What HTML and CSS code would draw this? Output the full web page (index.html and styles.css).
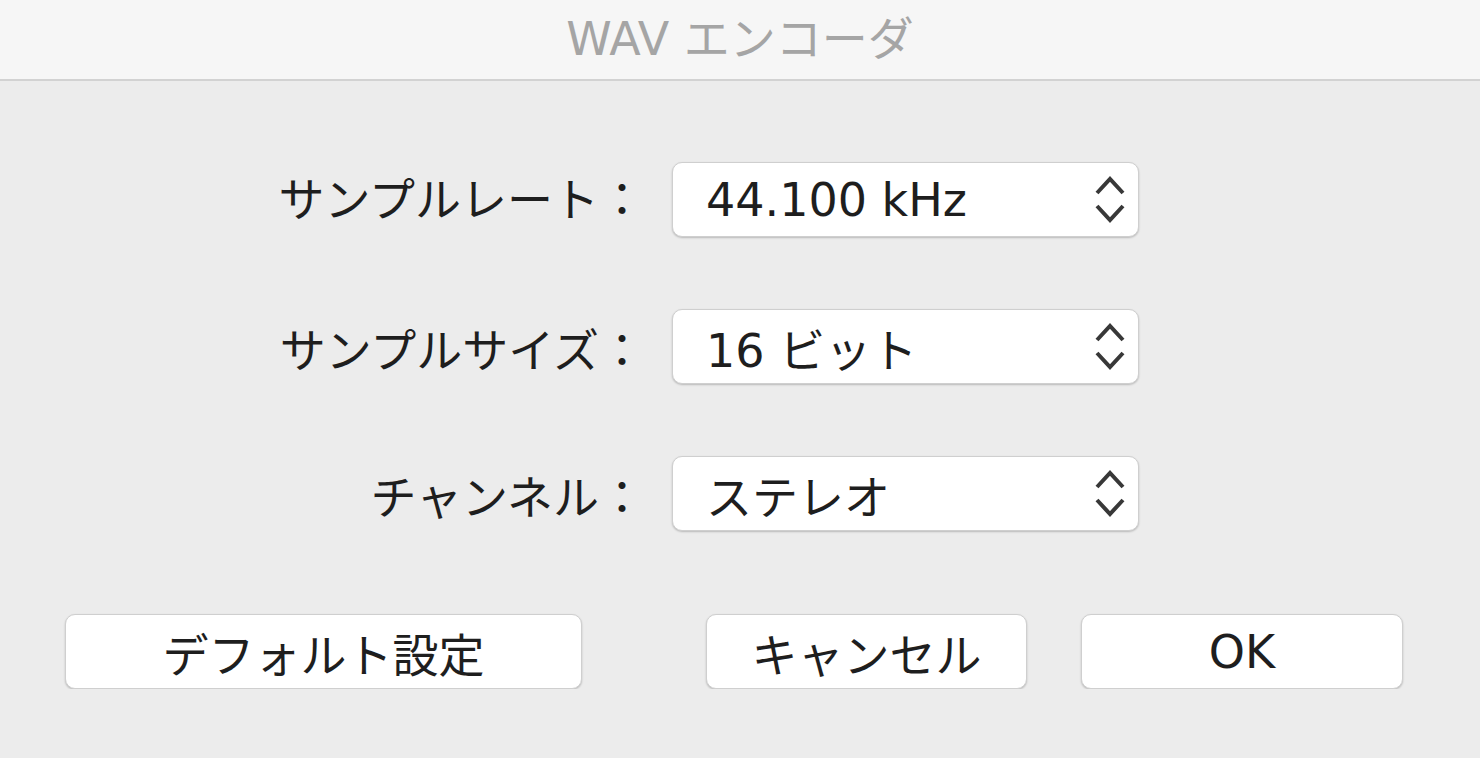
FILE: index.html
```html
<!DOCTYPE html>
<html lang="ja">
<head>
    <meta charset="UTF-8">
    <meta name="viewport" content="width=device-width, initial-scale=1.0">
    <title>WAV エンコーダ</title>
    <link rel="stylesheet" href="styles.css">
</head>
<body>

    <div class="titlebar">WAV エンコーダ</div>

    <div class="panel">
        <div class="form">
            <div class="label">サンプルレート：</div>
            <div class="select">
                <span>44.100 kHz</span>
                <svg class="arrows" width="30" height="48" viewBox="0 0 30 48"><polyline points="2,17 15,3 28,17"/><polyline points="2,30 15,44 28,30"/></svg>
            </div>

            <div class="label">サンプルサイズ：</div>
            <div class="select">
                <span>16 ビット</span>
                <svg class="arrows" width="30" height="48" viewBox="0 0 30 48"><polyline points="2,17 15,3 28,17"/><polyline points="2,30 15,44 28,30"/></svg>
            </div>

            <div class="label">チャンネル：</div>
            <div class="select">
                <span>ステレオ</span>
                <svg class="arrows" width="30" height="48" viewBox="0 0 30 48"><polyline points="2,17 15,3 28,17"/><polyline points="2,30 15,44 28,30"/></svg>
            </div>
        </div>

        <div class="buttons">
            <button class="btn btn-default">デフォルト設定</button>
            <button class="btn btn-cancel">キャンセル</button>
            <button class="btn btn-ok">OK</button>
        </div>
    </div>

</body>
</html>
```

FILE: styles.css
```css
body {
    margin: 0;
    background-color: #ececec;
    font-family: "DejaVu Sans", "Noto Sans CJK JP", sans-serif;
    color: #1e1e1e;
}
.titlebar {
    height: 79px;
    line-height: 79px;
    background-color: #f6f6f6;
    border-bottom: 2px solid #d2d2d2;
    text-align: center;
    color: #a5a5a5;
    font-size: 46px;
}
.form {
    display: grid;
    grid-template-columns: 645px 467px;
    column-gap: 27px;
    row-gap: 72px;
    align-items: baseline;
    padding-top: 81px;
}
.label {
    text-align: right;
    font-size: 46px;
}
.select {
    display: flex;
    align-items: center;
    justify-content: space-between;
    box-sizing: border-box;
    height: 75px;
    padding: 0 13px 0 33px;
    background-color: #fff;
    border: 1px solid #cfcfcf;
    border-radius: 10px;
    box-shadow: 0 1px 2px rgba(0, 0, 0, 0.22);
    font-size: 46px;
}
.arrows polyline {
    fill: none;
    stroke: #383838;
    stroke-width: 4;
    stroke-linejoin: miter;
}
.buttons {
    display: flex;
    padding: 83px 0 0 65px;
}
.btn {
    box-sizing: border-box;
    height: 75px;
    background-color: #fff;
    border: 1px solid #cfcfcf;
    border-radius: 10px;
    box-shadow: 0 1px 2px rgba(0, 0, 0, 0.22);
    font-family: inherit;
    font-size: 46px;
    color: #1e1e1e;
    padding: 0;
}
.btn-default {
    width: 517px;
}
.btn-cancel {
    width: 321px;
    margin-left: 124px;
}
.btn-ok {
    width: 322px;
    margin-left: 54px;
}
```
